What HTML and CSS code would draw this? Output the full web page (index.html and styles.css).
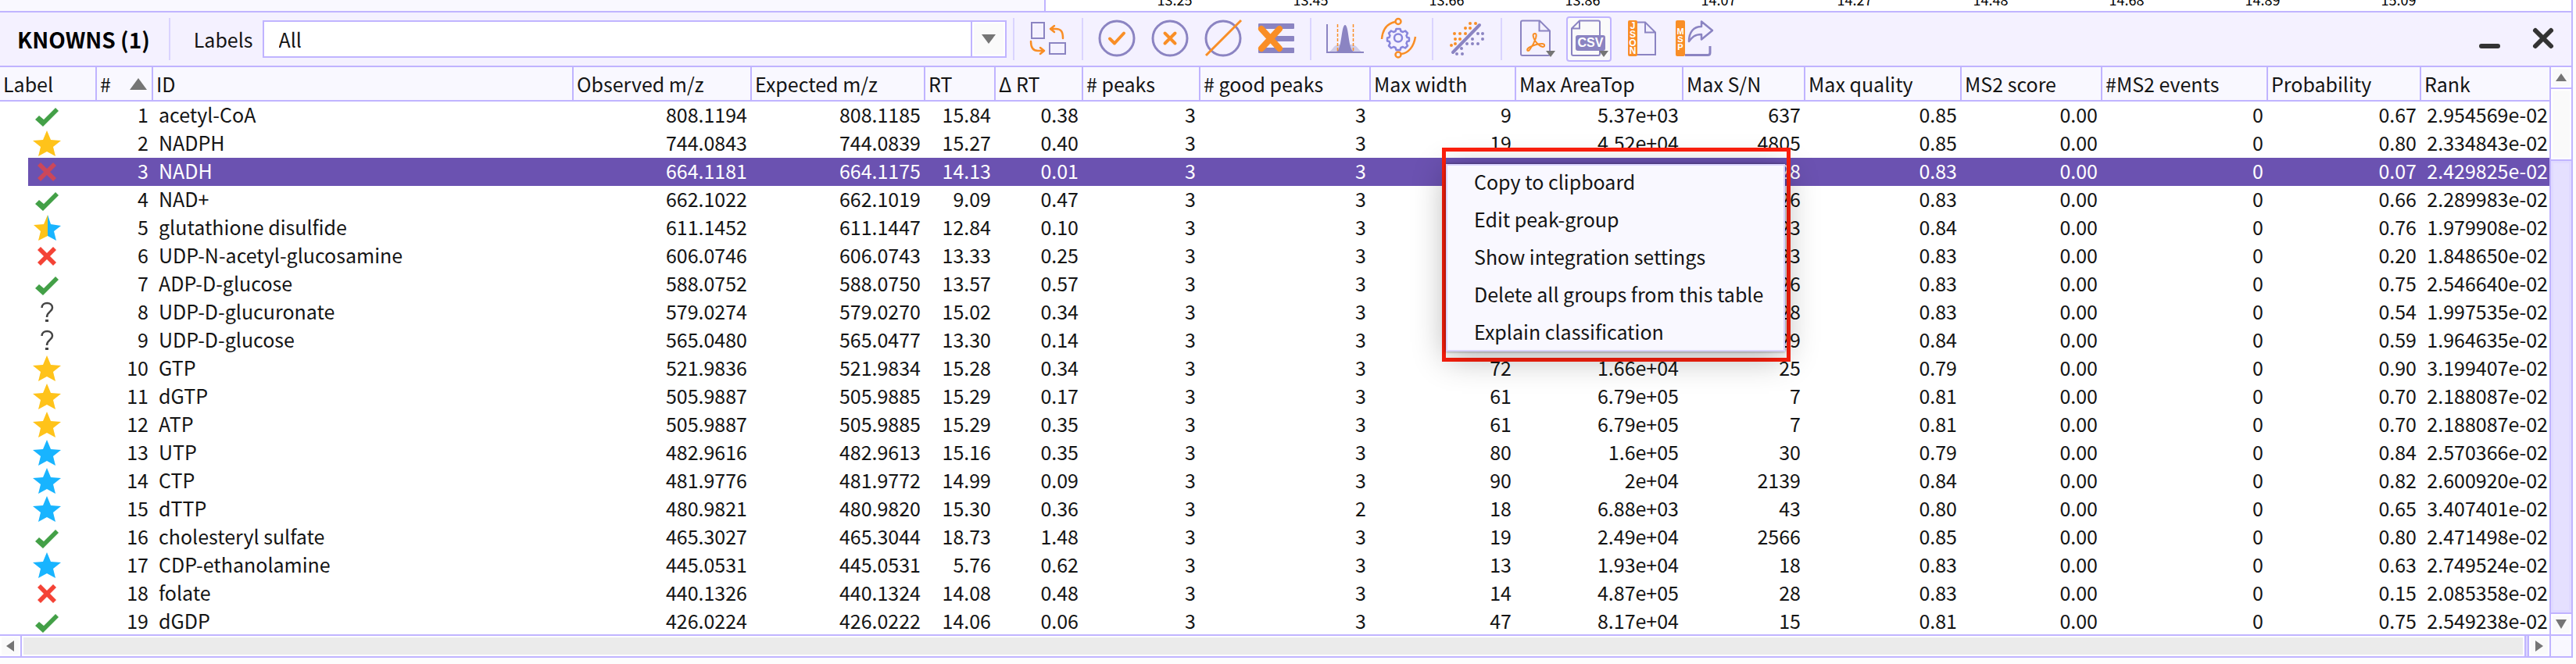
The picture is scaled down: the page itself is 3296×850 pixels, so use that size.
FILE: index.html
```
<!DOCTYPE html>
<html lang="en">
<head>
<meta charset="utf-8">
<title>Knowns</title>
<link rel="stylesheet" href="styles.css">
</head>
<body>
<svg class="defs" aria-hidden="true">
  <symbol id="check" viewBox="0 0 36 36"><path d="M3 23l5-5 6 5L29 8l4 4-20 20z" fill="#43a047"/></symbol>
  <symbol id="cross" viewBox="0 0 36 36"><path d="M6 10l4-4 8 8 8-8 4 4-8 8 8 8-4 4-8-8-8 8-4-4 8-8z" fill="#f44336"/></symbol>
  <symbol id="star" viewBox="0 0 36 36"><path d="M18 1l5 12 13 1-10 8 3 12-11-6-11 6 3-12L0 14l13-1z" fill="currentColor"/></symbol>
  <symbol id="halfstar" viewBox="0 0 36 36"><path d="M19 1l-5 12-13 1 9 8-3 12 12-6z" fill="#ffc31a"/><path d="M19 1l4 12 13 2-9 7 3 12-11-6z" fill="#18b4ff"/></symbol>
  <symbol id="question" viewBox="0 0 36 36"><path d="M11.5 12c0-8 13.500-8 13.500 0 0 5-7 5-7 12" fill="none" stroke="#444" stroke-width="2.500"/><path d="M16 27h4v3h-4z" fill="#444"/></symbol>
</svg>

<main class="panel">
  <div class="chart">
    <div class="chart-side"></div>
    <div class="chart-axis">
      <span>13.25</span><span>13.45</span><span>13.66</span><span>13.86</span><span>14.07</span><span>14.27</span><span>14.48</span><span>14.68</span><span>14.89</span><span>15.09</span>
    </div>
  </div>

  <header class="toolbar">
    <h1 class="title">KNOWNS (1)</h1>
    <span class="sep"></span>
    <div class="filter">
      <label for="labels">Labels</label>
      <div class="combo">
        <select id="labels"><option>All</option></select>
        <span class="combo-arrow"><svg viewBox="0 0 18 12" width="18" height="12"><path d="M0 0h18L9 12z" fill="#757575"/></svg></span>
      </div>
    </div>
    <span class="sep"></span>
    <button class="tool" aria-label="Swap view"><svg viewBox="0 0 58 58"><g fill="none" stroke="#8b84c2" stroke-width="2"><path d="M8 8h16v20H8zM31 34h20v14H31z"/></g><g fill="none" stroke="#f98e26" stroke-width="2.500" stroke-linecap="round" stroke-linejoin="round"><path d="M48 28c0-8-2-12-9-12h-7m5-4l-5 4 5 4M7 32c0 8 3 12 9 12h8m-5-4l5 4-5 4"/></g></svg></button>
    <span class="sep"></span>
    <button class="tool" aria-label="Mark good"><svg viewBox="0 0 58 58"><circle cx="29" cy="28" r="22" fill="none" stroke="#8b84c2" stroke-width="3"/><path d="M20 28.500l6 6L38 21.500" fill="none" stroke="#f98e26" stroke-width="4" stroke-linecap="round" stroke-linejoin="round"/></svg></button>
    <button class="tool" aria-label="Mark bad"><svg viewBox="0 0 58 58"><circle cx="29" cy="28" r="22" fill="none" stroke="#8b84c2" stroke-width="3"/><path d="M22.500 21.500l13 13m0-13l-13 13" fill="none" stroke="#f98e26" stroke-width="4" stroke-linecap="round"/></svg></button>
    <button class="tool" aria-label="Clear mark"><svg viewBox="0 0 58 58"><circle cx="29" cy="28" r="22" fill="none" stroke="#8b84c2" stroke-width="3"/><path d="M7 50L52 5" stroke="#f98e26" stroke-width="3"/></svg></button>
    <button class="tool" aria-label="Delete rows"><svg viewBox="0 0 58 58"><g fill="#8b84c2"><rect x="6" y="9" width="46" height="7" rx="1"/><rect x="24" y="25" width="28" height="7" rx="1"/><rect x="6" y="40" width="46" height="7" rx="1"/></g><path d="M10 16l23 25m0-25L10 41" stroke="#f98e26" stroke-width="8" stroke-linecap="round"/></svg></button>
    <span class="sep"></span>
    <button class="tool" aria-label="Peak view"><svg viewBox="0 0 58 58"><path d="M7 46c6-2 7-9 13-10h18c7 1 8 8 14 10z" fill="#d0cde8"/><path d="M18 45c7-2 6-34 11-34s4 32 11 34z" fill="#8b84c2"/><path d="M19.500 10v35m20-35v35" stroke="#f98e26" stroke-width="1.500" stroke-dasharray="4 2"/><path d="M6 10v36h47" fill="none" stroke="#8b84c2" stroke-width="2"/></svg></button>
    <button class="tool" aria-label="Recompute"><svg viewBox="0 0 58 58"><g fill="none" stroke="#f98e26" stroke-width="2.500"><circle cx="29" cy="6.500" r="3.500"/><circle cx="29" cy="49" r="3.500"/><path d="M25 7C15 9 9 17 8 29M33 48c9-1 16-9 18-22"/></g><g fill="none" stroke="#8886dc" stroke-width="2.500" stroke-linejoin="round"><circle cx="29" cy="27.500" r="5"/><path d="M26.500 16h5l1 3 2.500 1 3-1.500 3 3-1.500 3 1 2.500 2.500.5v4l-2.500.5-1 2.500 1.500 3-3 3-3-1.500-2.500 1-1 3h-5l-1-3-2.500-1-3 1.500-3-3 1.500-3-1-2.500-2.500-.5v-4l2.500-.5 1-2.500-1.500-3 3-3 3 1.500 2.500-1z"/></g></svg></button>
    <span class="sep"></span>
    <button class="tool" aria-label="Scatter plot"><svg viewBox="0 0 58 58"><path d="M11 46l34-35" stroke="#8b84c2" stroke-width="4" stroke-linecap="round"/><g stroke-width="4" stroke-linecap="round" fill="none"><path stroke="#f98e26" d="M33 9h0M40 9h0M27 15h0M33 15h0M13 22h0M20 22h0M27 22h0M14 29h0M20 29h0M14 35h0M9 37h0"/><path stroke="#8b84c2" d="M43 22h0M49 22h0M36 29h0M49 29h0M29 35h0M36 35h0M43 35h0M22 41h0M16 48h0M23 48h0"/></g></svg></button>
    <span class="sep"></span>
    <button class="tool" aria-label="Export PDF"><svg viewBox="0 0 58 58"><path d="M12 5.500h22l13 13V48q0 2-2 2H12q-2 0-2-2V7.500q0-2 2-2zM33.500 6v12.500H46" fill="none" stroke="#8b84c2" stroke-width="2"/><path d="M28 22c-3 0-3 3-1 7 3 6 7 9 11 10 3 0 3-4-1-4-6 0-11 2-15 4-6 3-4 7-1 4 3-4 6-9 8-15 1-4 1-6-1-6z" fill="none" stroke="#f98e26" stroke-width="2"/><path d="M42 44h12l-6 8z" fill="#757575"/></svg></button>
    <button class="tool active" aria-label="Export CSV"><svg viewBox="0 0 58 58"><path d="M17 5.500h24q2 0 2 2V48q0 2-2 2H9q-2 0-2-2V15.500zM17 6v9.500H8" fill="none" stroke="#8b84c2" stroke-width="2"/><rect x="12" y="24" width="38" height="20" rx="3" fill="#8b84c2"/><text class="glyph" x="31" y="39" font-size="16">CSV</text><path d="M42 44h12l-6 8z" fill="#757575"/></svg></button>
    <button class="tool" aria-label="Export JSON"><svg viewBox="0 0 58 58"><path d="M20 7.500h13l13 13V49H20zM33 8v12.500h12" fill="none" stroke="#8b84c2" stroke-width="2"/><rect x="11" y="5" width="12" height="46" rx="2" fill="#f98e26"/><g class="glyph" font-size="12"><text x="17" y="16">J</text><text x="17" y="27">S</text><text x="17" y="38">O</text><text x="17" y="48">N</text></g></svg></button>
    <button class="tool" aria-label="Export MSP"><svg viewBox="0 0 58 58"><rect x="4" y="5" width="12" height="46" rx="2" fill="#f98e26"/><g class="glyph" font-size="11"><text x="10" y="23">M</text><text x="10" y="33">S</text><text x="10" y="43">P</text></g><path d="M21 32c0-12 6-19 16-19V6.500L51 18 37 29.500V23c-9 0-12 4-16 9z" fill="none" stroke="#8b84c2" stroke-width="2.500" stroke-linejoin="round"/><path d="M16 49.500h29q3 0 3-3V38" fill="none" stroke="#8b84c2" stroke-width="3"/></svg></button>
    <div class="window-buttons">
      <button class="tool" aria-label="Minimize"><svg viewBox="0 0 58 58"><path d="M18 38h21" stroke="#333" stroke-width="6" stroke-linecap="round"/></svg></button>
      <button class="tool" aria-label="Close"><svg viewBox="0 0 58 58"><path d="M19 18l20 20m0-20L19 38" stroke="#333" stroke-width="6" stroke-linecap="round"/></svg></button>
    </div>
  </header>

  <section class="body">
    <div class="grid">
      <table class="peaks">
        <colgroup><col class="c-label"><col class="c-num"><col class="c-id"><col class="c-obs"><col class="c-exp"><col class="c-rt"><col class="c-drt"><col class="c-peaks"><col class="c-good"><col class="c-width"><col class="c-area"><col class="c-sn"><col class="c-quality"><col class="c-score"><col class="c-events"><col class="c-prob"><col></colgroup>
        <thead><tr><th>Label</th><th><span class="sorted">#<svg viewBox="0 0 22 15" width="22" height="15"><path d="M0 15h22L11 0z" fill="#757575"/></svg></span></th><th>ID</th><th>Observed m/z</th><th>Expected m/z</th><th>RT</th><th>Δ RT</th><th># peaks</th><th># good peaks</th><th>Max width</th><th>Max AreaTop</th><th>Max S/N</th><th>Max quality</th><th>MS2 score</th><th>#MS2 events</th><th>Probability</th><th>Rank</th></tr></thead>
        <tbody>
          <tr><td><svg><use href="#check"/></svg></td><td>1</td><td>acetyl-CoA</td><td>808.1194</td><td>808.1185</td><td>15.84</td><td>0.38</td><td>3</td><td>3</td><td>9</td><td>5.37e+03</td><td>637</td><td>0.85</td><td>0.00</td><td>0</td><td>0.67</td><td>2.954569e-02</td></tr>
          <tr><td><svg class="gold"><use href="#star"/></svg></td><td>2</td><td>NADPH</td><td>744.0843</td><td>744.0839</td><td>15.27</td><td>0.40</td><td>3</td><td>3</td><td>19</td><td>4.52e+04</td><td>4805</td><td>0.85</td><td>0.00</td><td>0</td><td>0.80</td><td>2.334843e-02</td></tr>
          <tr class="selected"><td><svg><use href="#cross"/></svg></td><td>3</td><td>NADH</td><td>664.1181</td><td>664.1175</td><td>14.13</td><td>0.01</td><td>3</td><td>3</td><td></td><td></td><td>28</td><td>0.83</td><td>0.00</td><td>0</td><td>0.07</td><td>2.429825e-02</td></tr>
          <tr><td><svg><use href="#check"/></svg></td><td>4</td><td>NAD+</td><td>662.1022</td><td>662.1019</td><td>9.09</td><td>0.47</td><td>3</td><td>3</td><td></td><td></td><td>26</td><td>0.83</td><td>0.00</td><td>0</td><td>0.66</td><td>2.289983e-02</td></tr>
          <tr><td><svg><use href="#halfstar"/></svg></td><td>5</td><td>glutathione disulfide</td><td>611.1452</td><td>611.1447</td><td>12.84</td><td>0.10</td><td>3</td><td>3</td><td></td><td></td><td>23</td><td>0.84</td><td>0.00</td><td>0</td><td>0.76</td><td>1.979908e-02</td></tr>
          <tr><td><svg><use href="#cross"/></svg></td><td>6</td><td>UDP-N-acetyl-glucosamine</td><td>606.0746</td><td>606.0743</td><td>13.33</td><td>0.25</td><td>3</td><td>3</td><td></td><td></td><td>33</td><td>0.83</td><td>0.00</td><td>0</td><td>0.20</td><td>1.848650e-02</td></tr>
          <tr><td><svg><use href="#check"/></svg></td><td>7</td><td>ADP-D-glucose</td><td>588.0752</td><td>588.0750</td><td>13.57</td><td>0.57</td><td>3</td><td>3</td><td></td><td></td><td>26</td><td>0.83</td><td>0.00</td><td>0</td><td>0.75</td><td>2.546640e-02</td></tr>
          <tr><td><svg><use href="#question"/></svg></td><td>8</td><td>UDP-D-glucuronate</td><td>579.0274</td><td>579.0270</td><td>15.02</td><td>0.34</td><td>3</td><td>3</td><td></td><td></td><td>28</td><td>0.83</td><td>0.00</td><td>0</td><td>0.54</td><td>1.997535e-02</td></tr>
          <tr><td><svg><use href="#question"/></svg></td><td>9</td><td>UDP-D-glucose</td><td>565.0480</td><td>565.0477</td><td>13.30</td><td>0.14</td><td>3</td><td>3</td><td></td><td></td><td>29</td><td>0.84</td><td>0.00</td><td>0</td><td>0.59</td><td>1.964635e-02</td></tr>
          <tr><td><svg class="gold"><use href="#star"/></svg></td><td>10</td><td>GTP</td><td>521.9836</td><td>521.9834</td><td>15.28</td><td>0.34</td><td>3</td><td>3</td><td>72</td><td>1.66e+04</td><td>25</td><td>0.79</td><td>0.00</td><td>0</td><td>0.90</td><td>3.199407e-02</td></tr>
          <tr><td><svg class="gold"><use href="#star"/></svg></td><td>11</td><td>dGTP</td><td>505.9887</td><td>505.9885</td><td>15.29</td><td>0.17</td><td>3</td><td>3</td><td>61</td><td>6.79e+05</td><td>7</td><td>0.81</td><td>0.00</td><td>0</td><td>0.70</td><td>2.188087e-02</td></tr>
          <tr><td><svg class="gold"><use href="#star"/></svg></td><td>12</td><td>ATP</td><td>505.9887</td><td>505.9885</td><td>15.29</td><td>0.35</td><td>3</td><td>3</td><td>61</td><td>6.79e+05</td><td>7</td><td>0.81</td><td>0.00</td><td>0</td><td>0.70</td><td>2.188087e-02</td></tr>
          <tr><td><svg class="blue"><use href="#star"/></svg></td><td>13</td><td>UTP</td><td>482.9616</td><td>482.9613</td><td>15.16</td><td>0.35</td><td>3</td><td>3</td><td>80</td><td>1.6e+05</td><td>30</td><td>0.79</td><td>0.00</td><td>0</td><td>0.84</td><td>2.570366e-02</td></tr>
          <tr><td><svg class="blue"><use href="#star"/></svg></td><td>14</td><td>CTP</td><td>481.9776</td><td>481.9772</td><td>14.99</td><td>0.09</td><td>3</td><td>3</td><td>90</td><td>2e+04</td><td>2139</td><td>0.84</td><td>0.00</td><td>0</td><td>0.82</td><td>2.600920e-02</td></tr>
          <tr><td><svg class="blue"><use href="#star"/></svg></td><td>15</td><td>dTTP</td><td>480.9821</td><td>480.9820</td><td>15.30</td><td>0.36</td><td>3</td><td>2</td><td>18</td><td>6.88e+03</td><td>43</td><td>0.80</td><td>0.00</td><td>0</td><td>0.65</td><td>3.407401e-02</td></tr>
          <tr><td><svg><use href="#check"/></svg></td><td>16</td><td>cholesteryl sulfate</td><td>465.3027</td><td>465.3044</td><td>18.73</td><td>1.48</td><td>3</td><td>3</td><td>19</td><td>2.49e+04</td><td>2566</td><td>0.85</td><td>0.00</td><td>0</td><td>0.80</td><td>2.471498e-02</td></tr>
          <tr><td><svg class="blue"><use href="#star"/></svg></td><td>17</td><td>CDP-ethanolamine</td><td>445.0531</td><td>445.0531</td><td>5.76</td><td>0.62</td><td>3</td><td>3</td><td>13</td><td>1.93e+04</td><td>18</td><td>0.83</td><td>0.00</td><td>0</td><td>0.63</td><td>2.749524e-02</td></tr>
          <tr><td><svg><use href="#cross"/></svg></td><td>18</td><td>folate</td><td>440.1326</td><td>440.1324</td><td>14.08</td><td>0.48</td><td>3</td><td>3</td><td>14</td><td>4.87e+05</td><td>28</td><td>0.83</td><td>0.00</td><td>0</td><td>0.15</td><td>2.085358e-02</td></tr>
          <tr><td><svg><use href="#check"/></svg></td><td>19</td><td>dGDP</td><td>426.0224</td><td>426.0222</td><td>14.06</td><td>0.06</td><td>3</td><td>3</td><td>47</td><td>8.17e+04</td><td>15</td><td>0.81</td><td>0.00</td><td>0</td><td>0.75</td><td>2.549238e-02</td></tr>
        </tbody>
      </table>
    </div>
    <div class="vscroll">
      <button class="scroll-button" aria-label="Scroll up"><svg viewBox="0 0 14 10" width="14" height="10"><path d="M0 10h14L7 0z" fill="#757575"/></svg></button>
      <div class="vtrack"></div>
      <div class="vthumb"></div>
      <button class="scroll-button" aria-label="Scroll down"><svg viewBox="0 0 14 12" width="14" height="12"><path d="M0 0h14L7 12z" fill="#757575"/></svg></button>
    </div>
  </section>

  <footer class="hscroll">
    <button class="scroll-button" aria-label="Scroll left"><svg viewBox="0 0 10 14" width="10" height="14"><path d="M10 0v14L0 7z" fill="#757575"/></svg></button>
    <div class="htrack"></div>
    <div class="hrest"></div>
    <button class="scroll-button" aria-label="Scroll right"><svg viewBox="0 0 10 14" width="10" height="14"><path d="M0 0v14l10-7z" fill="#757575"/></svg></button>
    <div class="corner"></div>
  </footer>
</main>

<div class="highlight">
  <div class="menu" role="menu">
    <button role="menuitem">Copy to clipboard</button>
    <button role="menuitem">Edit peak-group</button>
    <button role="menuitem">Show integration settings</button>
    <button role="menuitem">Delete all groups from this table</button>
    <button role="menuitem">Explain classification</button>
  </div>
</div>
</body>
</html>
```
FILE: styles.css
```
* { box-sizing: border-box; }

:root {
  --line: #c0b4ff;
  --line-soft: #dad4ff;
  --bar: #f4f1ff;
  --head: #f9f8ff;
  --ink: #141414;
  --select: #6b52b1;
}

body {
  margin: 0;
  background: #fdfdfd;
  color: var(--ink);
  font: 25px/36px "Noto Sans CJK SC", "Noto Sans CJK JP", "Noto Sans", sans-serif;
}

button, select { font: inherit; color: inherit; margin: 0; padding: 0; border: 0; background: none; }

.defs { position: absolute; width: 0; height: 0; }

.panel {
  display: flex;
  flex-direction: column;
  height: calc(100vh - 8px);
  margin-right: 4px;
  border-right: 2px solid var(--line);
  background: #fff;
}

/* lower edge of the chart above the table */
.chart { display: flex; flex: none; height: 16px; border-bottom: 2px solid var(--line); overflow: hidden; }
.chart-side { flex: none; width: 1338px; background: var(--head); border-right: 2px solid var(--line); }
.chart-axis {
  display: flex;
  flex: none;
  align-items: flex-end;
  padding-left: 78px;
  font-size: 18px;
  line-height: 26px;
  color: #000;
}
.chart-axis span { width: 174px; text-align: center; margin-bottom: 2px; }

.toolbar {
  display: flex;
  flex: none;
  align-items: center;
  gap: 10px;
  height: 70px;
  padding: 0 7px 0 22px;
  background: var(--bar);
  border-bottom: 2px solid var(--line);
}
.title { margin: 0 10px 0 0; font-size: 28px; line-height: 40px; font-weight: 700; color: #000; white-space: nowrap; }
.sep { flex: none; width: 2px; height: 54px; margin: 0 4px; background: var(--line-soft); }
.filter { display: flex; flex: 0 1 1040px; align-items: center; gap: 12px; margin-left: 16px; margin-right: -6px; }
.combo { display: flex; flex: 1; height: 48px; border: 2px solid var(--line); background: #fff; position: relative; }
.combo select { appearance: none; width: 100%; padding: 0 60px 0 19px; outline: 0; line-height: 40px; }
.combo-arrow {
  position: absolute;
  inset: 0 0 0 auto;
  width: 44px;
  display: flex;
  align-items: center;
  justify-content: center;
  background: #fafafa;
  border-left: 2px solid var(--line);
  box-shadow: inset 0 0 0 2px #fff;
  pointer-events: none;
}

.tool { flex: none; width: 58px; height: 58px; border-radius: 4px; }
.tool svg { display: block; width: 58px; height: 58px; }
.tool.active { background: #fafafa; box-shadow: inset 0 0 0 2px var(--line); }
.glyph { fill: #fff; font-family: "Liberation Sans", sans-serif; font-weight: 700; text-anchor: middle; }
.window-buttons { display: flex; gap: 10px; margin-left: auto; }

.body { display: flex; flex: 1; min-height: 0; }
.grid { flex: 1; min-width: 0; overflow: hidden; }

.peaks { width: 100%; table-layout: fixed; border-collapse: separate; border-spacing: 0; }
.c-label { width: 124px; }
.c-num { width: 72px; }
.c-id { width: 538px; }
.c-obs { width: 228px; }
.c-exp { width: 222px; }
.c-rt { width: 90px; }
.c-drt { width: 112px; }
.c-peaks { width: 150px; }
.c-good { width: 218px; }
.c-width { width: 186px; }
.c-area { width: 214px; }
.c-sn { width: 156px; }
.c-quality { width: 200px; }
.c-score { width: 180px; }
.c-events { width: 212px; }
.c-prob { width: 196px; }

.peaks th {
  height: 44px;
  padding: 0 4px;
  text-align: left;
  font-weight: 400;
  white-space: nowrap;
  background: var(--head);
  border-right: 2px solid var(--line);
  border-bottom: 2px solid var(--line);
}
.peaks th:last-child { border-right: 0; }
.sorted { display: flex; align-items: center; justify-content: space-between; }
.sorted svg { margin-right: 2px; }

.peaks td { height: 36px; padding: 0 6px 4px; line-height: 32px; text-align: right; white-space: nowrap; }
.peaks td:first-child { padding: 0 0 0 42px; }
.peaks td:nth-child(3) { padding-left: 7px; text-align: left; }
.peaks td:last-child { padding: 0 2px 4px; }
.peaks td svg { display: block; width: 36px; height: 36px; }
.gold { color: #ffc31a; }
.blue { color: #18b4ff; }

.selected td { background: var(--select); color: #fff; }
.selected td:first-child { background: linear-gradient(to right, #fff 36px, var(--select) 36px); }
.selected svg { opacity: 0.7; }

.vscroll { display: flex; flex: none; flex-direction: column; width: 28px; border-left: 2px solid var(--line); }
.scroll-button {
  display: flex;
  flex: none;
  align-items: center;
  justify-content: center;
  width: 26px;
  height: 26px;
  background: #fafafa;
  box-shadow: inset 0 0 0 2px #fff;
}
.vtrack { height: 92px; background: #fafafa; border: solid var(--line); border-width: 2px 0 0; box-shadow: inset 0 0 0 2px #fff; }
.vthumb { flex: 1; background: #e5e0ff; border: solid var(--line); border-width: 2px 0; box-shadow: inset 0 0 0 3px #e0daff; }

.hscroll { display: flex; flex: none; height: 30px; border: solid var(--line); border-width: 2px 0; background: #fff; }
.htrack { flex: 1; background: #ebebeb; border: solid var(--line); border-width: 0 2px; box-shadow: inset 0 0 0 2px #fff; }
.hrest { width: 4px; background: var(--line-soft); border-right: 2px solid var(--line); }
.corner { width: 28px; background: var(--head); border-left: 2px solid var(--line); }

/* context menu with its callout frame */
.highlight {
  position: absolute;
  left: 1845px;
  top: 189px;
  padding: 16px 2px 8px 0;
  border: 5px solid #ff1f0d;
}
.menu {
  display: flex;
  flex-direction: column;
  width: 434px;
  background: var(--head);
  outline: 2px solid #dad4ff;
  outline-offset: -2px;
  box-shadow: 0 0 3px rgba(0, 0, 0, 0.5), 0 8px 40px rgba(0, 0, 0, 0.3);
}
.menu button { height: 48px; padding: 0 0 4px 36px; text-align: left; white-space: nowrap; }
```
